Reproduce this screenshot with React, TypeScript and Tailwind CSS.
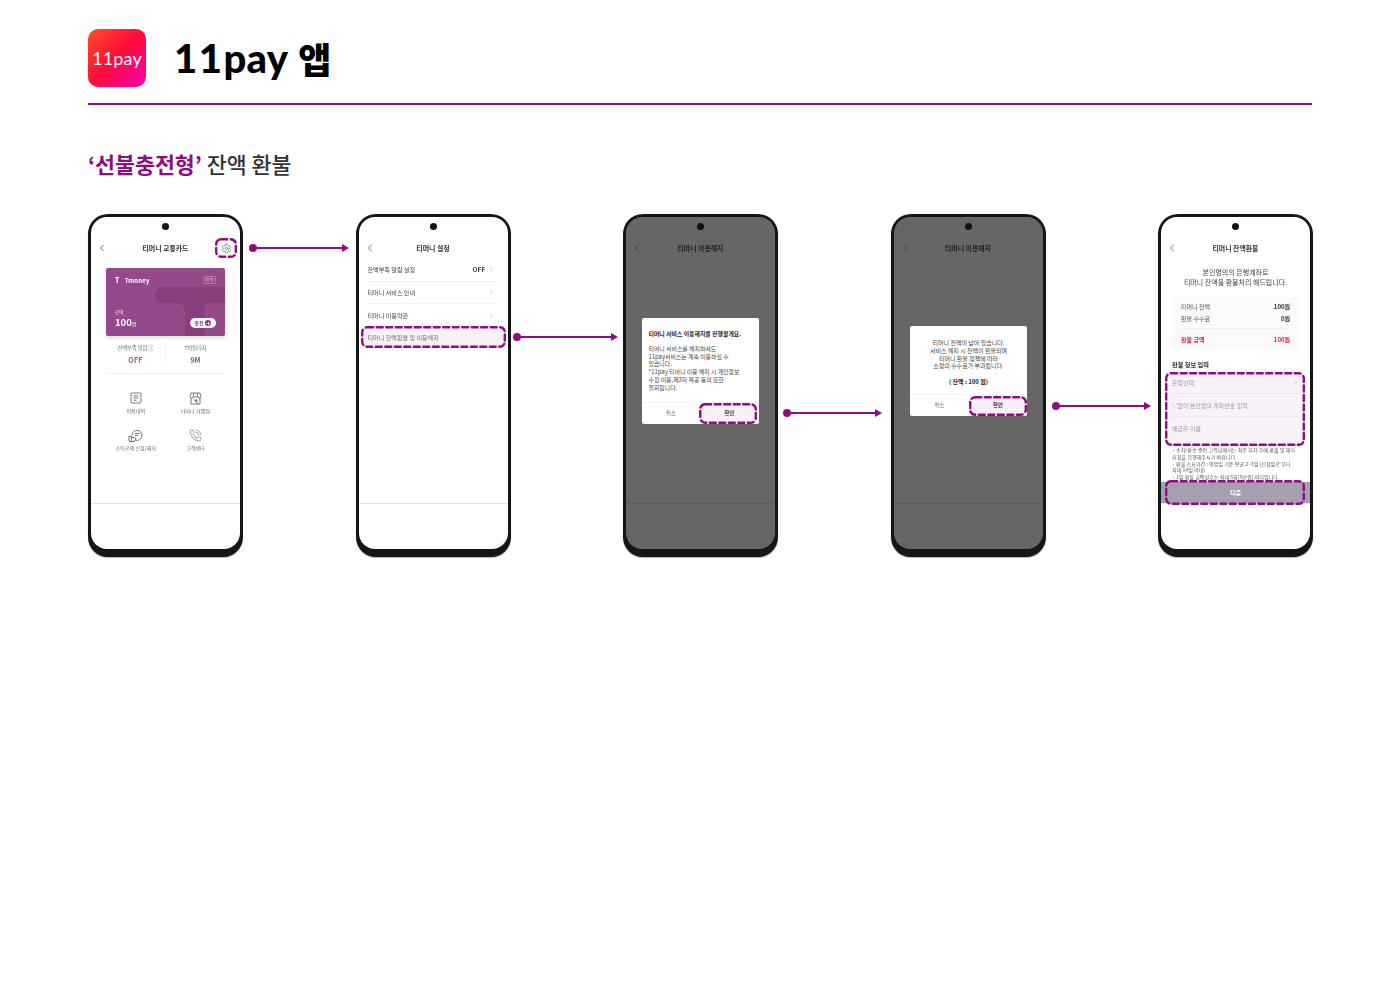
import React from 'react';
import { ChevronDown, ChevronLeft, ChevronRight, PhoneCall, Plus, Settings } from 'lucide-react';

const font = { fontFamily: '"Noto Sans CJK KR", sans-serif' };

// dashed callout round the thing you are meant to press
function Dashed({ className, w, h, fill }: { className: string; w: number; h: number; fill?: boolean }) {
  return (
    <svg className={`absolute ${className}`} width={w} height={h} viewBox={`0 0 ${w} ${h}`}>
      <rect
        x="1.2"
        y="1.2"
        width={w - 2.4}
        height={h - 2.4}
        rx="5"
        fill={fill ? '#920a84' : 'none'}
        fillOpacity="0.06"
        stroke="#920a84"
        strokeWidth="2.4"
        strokeLinecap="round"
        strokeDasharray="6 3.5"
      />
    </svg>
  );
}

function Arrow({ className }: { className: string }) {
  return (
    <div className={`flex h-[8px] w-[112.5px] shrink-0 items-center self-start ${className}`}>
      <div className="h-[8px] w-[8px] shrink-0 rounded-full bg-[#920a84]" />
      <div className="h-[2px] flex-1 bg-[#920a84]" />
      <div className="h-0 w-0 shrink-0 border-y-[4px] border-l-[7px] border-y-transparent border-l-[#920a84]" />
    </div>
  );
}

function Phone({ children, title, dim }: { children?: React.ReactNode; title: string; dim?: boolean }) {
  return (
    <div className="relative h-[343px] w-[155px] shrink-0 rounded-[20px] border-x-[3px] border-t-[3px] border-b-[8px] border-[#141717] bg-[#141717] shadow-[0_1px_1px_rgba(0,0,0,0.3)]">
      <div className={`relative flex h-full flex-col overflow-hidden rounded-[16px] ${dim ? 'bg-[#666]' : 'bg-white'}`}>
        <div className="flex h-[19px] shrink-0 justify-center pt-[6px]">
          <div className="h-[7px] w-[7px] rounded-full bg-[#111]" />
        </div>
        <div className={`relative flex h-[24px] shrink-0 items-center justify-center text-[6.9px] font-bold ${dim ? 'text-[#222]' : 'text-[#333]'}`}>
          <ChevronLeft className={`absolute left-[5px] h-[12px] w-[12px] ${dim ? 'text-[#333]' : 'text-[#444]'}`} strokeWidth={1.5} />
          {title}
        </div>
        <div className="flex-1">{!dim && children}</div>
        <div className={`h-[46px] shrink-0 border-t ${dim ? 'border-[#5d5d5d]' : 'border-[#e4e4e4]'}`} />
        {dim && children}
      </div>
    </div>
  );
}

function MenuIcon({ icon, label }: { icon: React.ReactNode; label: string }) {
  return (
    <div className="flex h-[37px] flex-col items-center text-[5.1px] text-[#666]">
      <div className="flex h-[16px] items-center text-[#555]">{icon}</div>
      <div className="mt-[1px] leading-[8px]">{label}</div>
    </div>
  );
}

function CardScreen() {
  return (
    <div className="px-[15px] pt-[8px]">
      <div className="relative h-[68px] overflow-hidden rounded-[2px] bg-[#93498a] text-white shadow-[0_2px_4px_rgba(0,0,0,0.15)]">
        <svg className="absolute inset-0" width="119" height="68" viewBox="0 0 119 68">
          <path d="M49 27 Q49 19 58 19 H119 V35 H99 V68 H79 V44 Q79 35 70 35 H58 Q49 35 49 27 Z" fill="#883f7e" />
        </svg>
        <div className="relative flex h-full flex-col px-[9px]">
          <div className="flex h-[24px] items-center justify-between">
            <div className="flex items-center gap-[5px] text-[6px] font-bold tracking-[0.2px]">
              <span className="text-[7px] font-black">T</span>
              Tmoney
            </div>
            <div className="rounded-[1px] border border-[#b07fa8] px-[1.5px] text-[3px] leading-[6px] text-[#e4cfe1]">충전형</div>
          </div>
          <div className="mt-[17px] text-[4.5px] leading-[7px] text-[#e8d5e5]">잔액</div>
          <div className="flex items-center justify-between">
            <div className="text-[9.5px] font-bold leading-[12px]">
              100<span className="text-[5px] font-normal">원</span>
            </div>
            <div className="flex h-[10px] w-[26px] items-center justify-center gap-[2px] rounded-full bg-white text-[4.8px] font-bold text-[#6b3a66]">
              충전
              <span className="flex h-[6px] w-[6px] items-center justify-center rounded-full bg-[#7b3f75] text-white">
                <Plus className="h-[5px] w-[5px]" strokeWidth={3} />
              </span>
            </div>
          </div>
        </div>
      </div>
      <div className="mt-[6px] flex h-[32px] border-b border-[#f0f0f0] pb-[8px] text-center">
        <div className="flex-1 border-r border-[#f2f2f2]">
          <div className="text-[5.2px] leading-[12px] text-[#666]">잔액부족 알림 ⓘ</div>
          <div className="text-[7px] font-bold leading-[12px] tracking-[0.3px] text-[#8d5a88]">OFF</div>
        </div>
        <div className="flex-1">
          <div className="text-[5.2px] leading-[12px] text-[#666]">T마일리지</div>
          <div className="text-[7px] font-bold leading-[12px] text-[#8d5a88]">9M</div>
        </div>
      </div>
      <div className="mt-[16px] grid grid-cols-2">
        <MenuIcon
          label="이용내역"
          icon={
            <svg width="12" height="12" viewBox="0 0 12 12" fill="none" stroke="currentColor" strokeWidth="0.8">
              <rect x="1" y="1" width="10" height="10" rx="1" />
              <path d="M3.5 3.8h5M3.5 6h5M3.5 8.2h3" />
            </svg>
          }
        />
        <MenuIcon
          label="티머니 가맹점"
          icon={
            <svg width="13" height="13" viewBox="0 0 13 13" fill="none" stroke="currentColor" strokeWidth="0.8">
              <path d="M2 1h9l1 3.5a1.5 1.5 0 0 1-3 0 1.5 1.5 0 0 1-2.5 0 1.5 1.5 0 0 1-2.5 0 1.5 1.5 0 0 1-3 0z" />
              <path d="M2 6v6h9V6M4.6 1v3.5M8.4 1v3.5M5 8h3v4M6.5 8v2" />
            </svg>
          }
        />
        <MenuIcon
          label="소득공제 신청/해지"
          icon={
            <svg width="15" height="13" viewBox="0 0 15 13" fill="none" stroke="currentColor" strokeWidth="0.8">
              <path d="M4 6.5a5 5 0 1 1 3.5 4.7" />
              <path d="M7 4.5h4.5M7 6.5h3" />
              <path d="M1 7.5h2.5v5H1zM3.5 8.5h3l1.5 1.2-1.5 2.8h-3" />
            </svg>
          }
        />
        <MenuIcon label="고객센터" icon={<PhoneCall className="h-[13px] w-[13px]" strokeWidth={1} />} />
      </div>
    </div>
  );
}

function SettingRow({ label, right, line }: { label: string; right?: string; line?: boolean }) {
  return (
    <div className={`flex h-[22.5px] items-center justify-between pr-[4px] text-[6.1px] text-[#444] ${line ? 'border-b border-[#f2f2f2]' : ''}`}>
      <span>{label}</span>
      <span className="flex items-center gap-[2px] text-[6.4px] font-bold tracking-[0.2px] text-[#333]">
        {right}
        <ChevronRight className="h-[7px] w-[7px] text-[#888]" strokeWidth={1.5} />
      </span>
    </div>
  );
}

function SettingsScreen() {
  return (
    <div className="-mt-[1px] px-[9px]">
      <SettingRow label="잔액부족 알림 설정" right="OFF" line />
      <SettingRow label="티머니 서비스 안내" line />
      <SettingRow label="티머니 이용약관" />
      <div className="flex h-[22.5px] items-center text-[6.1px] text-[#777]">티머니 잔액환불 및 이용해지</div>
    </div>
  );
}

function Modal({ className, children }: { className: string; children: React.ReactNode }) {
  return (
    <div className={`absolute w-[117px] rounded-[2px] bg-white ${className}`}>
      {children}
      <div className="flex h-[22px] items-center border-t border-[#f4f4f4] text-[5.5px]">
        <div className="flex-1 text-center text-[#777]">취소</div>
        <div className="flex-1 text-center font-bold text-[#333]">확인</div>
      </div>
    </div>
  );
}

function AmountRow({ label, value, red }: { label: string; value: string; red?: boolean }) {
  return (
    <div className={`flex h-[12px] items-center justify-between text-[6px] ${red ? 'font-bold text-[#d0274f]' : 'text-[#555]'}`}>
      <span>{label}</span>
      <span className={`font-bold ${red ? '' : 'text-[#333]'}`}>{value}</span>
    </div>
  );
}

function RefundScreen() {
  return (
    <div className="relative h-[243px] overflow-hidden">
      <div className="mt-[8px] text-center text-[7px] leading-[9.5px] text-[#444]">
        본인명의의 은행계좌로
        <br />
        티머니 잔액을 환불처리 해드립니다.
      </div>
      <div className="mx-[10px] mt-[10px] h-[52px] bg-[#fafafa] px-[10px] pt-[3px]">
        <AmountRow label="티머니 잔액" value="100원" />
        <AmountRow label="환불 수수료" value="0원" />
        <div className="mt-[4px] border-t border-[#eee] pt-[4px]">
          <AmountRow label="환불 금액" value="100원" red />
        </div>
      </div>
      <div className="ml-[11px] mt-[12px] text-[6.2px] font-bold leading-[8px] text-[#333]">환불 정보 입력</div>
      <div className="mx-[11px] mt-[2px] text-[6px] text-[#aaa]">
        <div className="flex h-[23px] items-center justify-between border-b border-[#f2f2f2]">
          은행선택
          <ChevronDown className="h-[7px] w-[7px]" />
        </div>
        <div className="flex h-[23px] items-center border-b border-[#f2f2f2]">‘-’없이 본인명의 계좌번호 입력</div>
        <div className="flex h-[23px] items-center">예금주 이름</div>
      </div>
      <div className="mx-[11px] mt-[7px] whitespace-nowrap text-[5.1px] leading-[6.8px] text-[#555]">
        · 송차/환승 중인 고객님께서는 최종 하차 후에 환불 및 해지
        <br />
        요청을 진행해주시기 바랍니다
        <br />
        · 환불 소요기간 : 영업일 기준 평균 2~3일 (신청일로 부터
        <br />
        최대 14일 이내)
        <br />
        · 1일 환불 금액횟수는 최대 5회(5만원) 까지입니다
      </div>
      <div className="absolute inset-x-0 bottom-0 flex h-[21px] items-center justify-center bg-[#a69fb0] text-[6px] font-bold text-white">다음</div>
    </div>
  );
}

export default function App() {
  return (
    <div className="min-h-[998px] bg-white px-[88px] pt-[29px]" style={font}>
      <header className="flex h-[76px] items-start border-b-2 border-[#920a84]">
        <div
          className="flex h-[58px] w-[58px] items-center justify-center rounded-[10px] bg-[linear-gradient(135deg,#ff4f26_0%,#ff0a3c_50%,#ff00b4_100%)] text-[18px] tracking-[0.2px] text-white"
          style={{ fontFamily: 'Lato, sans-serif' }}
        >
          11pay
        </div>
        <h1
          className="ml-[28px] flex items-center text-[40px] font-black leading-[58px] text-black"
          style={{ fontFamily: 'Lato, "Noto Sans CJK KR", sans-serif' }}
        >
          <span className="tracking-[1.5px]">11</span>
          <span className="tracking-[0.3px]">pay</span>
          <span className="ml-[10px] text-[36px]" style={font}>앱</span>
        </h1>
      </header>

      <h2 className="mt-[43px] text-[21.7px] font-medium leading-[32px] text-[#333]">
        <span className="font-bold text-[#920a84]">‘선불충전형’</span> 잔액 환불
      </h2>

      <div className="mt-[34px] flex w-[1225px] blur-[0.3px]">
        <div className="relative">
          <Phone title="티머니 교통카드">
            <CardScreen />
          </Phone>
          <Settings className="absolute left-[133px] top-[29px] h-[11px] w-[11px] text-[#555]" strokeWidth={1.3} />
          <Dashed className="left-[127px] top-[24px]" w={22} h={20} />
        </div>
        <Arrow className="mt-[30px] pl-[6px] pr-[6.5px]" />
        <div className="relative">
          <Phone title="티머니 설정">
            <SettingsScreen />
          </Phone>
          <Dashed className="left-[5.5px] top-[112px]" w={145} h={22} fill />
        </div>
        <Arrow className="mt-[119px] pl-[2.5px] pr-[5px]" />
        <div className="relative">
          <Phone title="티머니 이용해지" dim>
            <Modal className="left-[15.5px] top-[101px]">
              <div className="h-[84px] px-[7px] pt-[12px] text-[5.9px] leading-[7.8px] text-[#444]">
                <div className="mb-[7px] font-bold text-[#222]">티머니 서비스 이용해지를 진행할게요.</div>
                티머니 서비스를 해지하셔도
                <br />
                11pay서비스는 계속 이용하실 수
                <br />
                있습니다.
                <br />
                *11pay 티머니 이용 해지 시 개인정보
                <br />
                수집 이용,제3자 제공 동의 또한
                <br />
                철회됩니다.
              </div>
            </Modal>
          </Phone>
          <Dashed className="left-[76px] top-[189px]" w={58} h={21} fill />
        </div>
        <Arrow className="mt-[195px] pl-[5px] pr-[8.5px]" />
        <div className="relative">
          <Phone title="티머니 이용해지" dim>
            <Modal className="left-[16.5px] top-[109px]">
              <div className="h-[68px] pt-[13px] text-center text-[6px] leading-[7.8px] text-[#444]">
                티머니 잔액이 남아 있습니다.
                <br />
                서비스 해지 시 잔액이 환불되며
                <br />
                티머니 환불 정책에 따라
                <br />
                소정의 수수료가 부과됩니다.
                <div className="mt-[8px] font-bold text-[#222]">( 잔액 : 100 원)</div>
              </div>
            </Modal>
          </Phone>
          <Dashed className="left-[78.5px] top-[182px]" w={58} h={20} fill />
        </div>
        <Arrow className="mt-[188px] pl-[6.5px] pr-[7px]" />
        <div className="relative">
          <Phone title="티머니 잔액환불">
            <RefundScreen />
          </Phone>
          <Dashed className="left-[7px] top-[158px]" w={140} h={74} fill />
          <Dashed className="left-[7px] top-[266px]" w={140} h={25} />
        </div>
      </div>
    </div>
  );
}
